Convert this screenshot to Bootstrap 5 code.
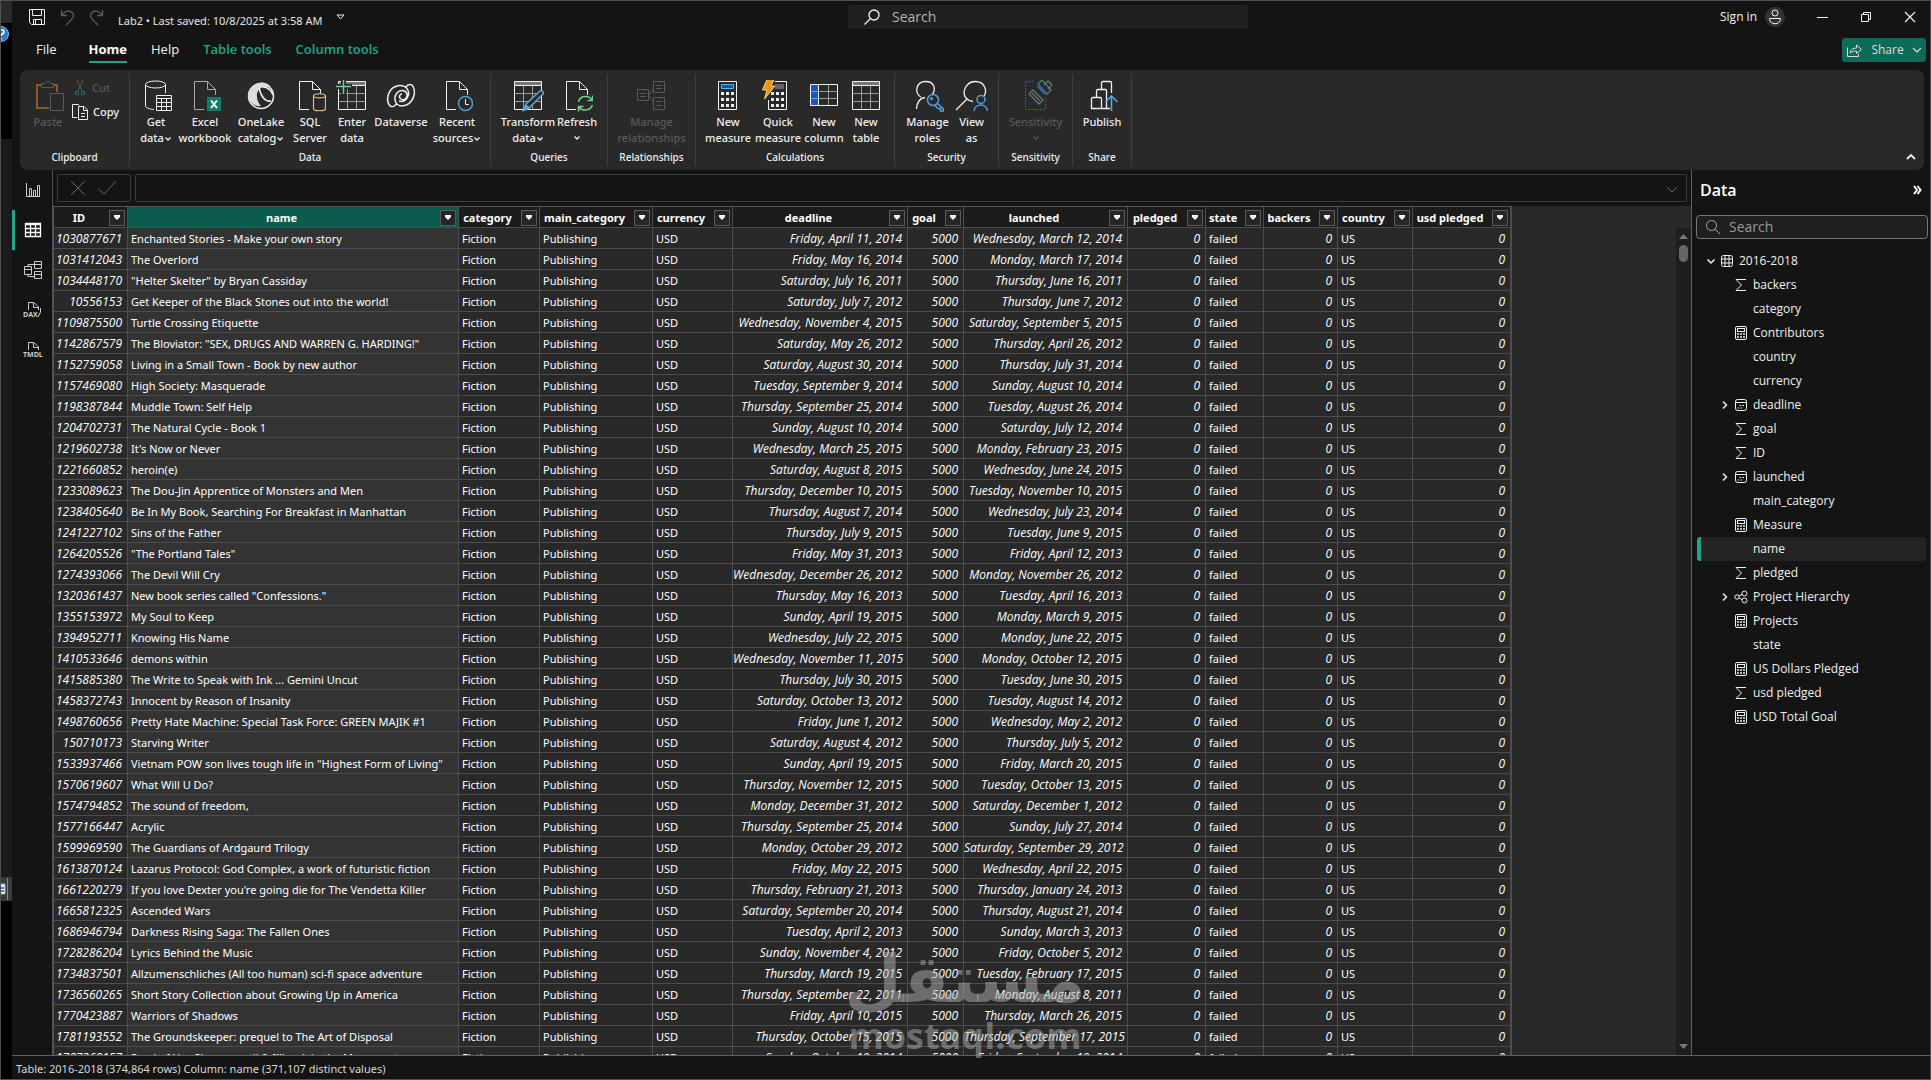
<!DOCTYPE html>
<html lang="en" data-bs-theme="dark">
<head>
<meta charset="utf-8">
<meta name="viewport" content="width=device-width, initial-scale=1">
<title>Lab2</title>
<link href="https://cdn.jsdelivr.net/npm/bootstrap@5.3.0/dist/css/bootstrap.min.css" rel="stylesheet">
<style>
:root{--bg:#141414;--panel:#292929;--line:#4d4d4d;--accent:#23a58c}
body{background:var(--bg);color:#f0f0f0;font-family:"Open Sans","Noto Sans",sans-serif;font-size:12px;line-height:16px;height:100vh;overflow:hidden;border:1px solid #505050}
button{background:none;border:0;padding:0;color:inherit;font:inherit}
svg{display:block;flex:none;fill:none;stroke:currentColor}
a{color:inherit;text-decoration:none}
.backdrop-strip{width:11px;background:#000}
.strip-top{height:22px;background:#2a2a2a}
.strip-mid{height:738px;margin-top:116px;background:#1b1b1b}
.strip-thumb{height:24px;background:#3a3a3a;color:#ddd}
.title-bar{height:32px}
.gap-14{gap:14px}
.gap-2px{gap:2px}
.doc-title{color:#e4e4e4}
.top-search{width:400px;height:24px;background:#1f1f1f;border-radius:2px}
.top-search input,.pane-search input{background:none;border:0;outline:0;color:#c8c8c8;font-size:14px;padding:0;width:100%}
.top-search input::placeholder,.pane-search input::placeholder{color:#b4b4b4;opacity:1}
.pane-search input::placeholder{color:#999}
.title-right{flex:0 0 682px;padding-right:14px}
.avatar{width:20px;height:20px;border-radius:50%;background:#333}
.tab-bar{height:37px;padding-bottom:3px;line-height:20px}
.tab-bar nav{font-size:13px}
.tab-bar a{height:26px;padding-top:2px}
.tab-bar a.current{font-weight:700;color:#fff;border-bottom:2px solid var(--accent)}
.tab-bar a.tool{color:var(--accent);font-weight:600}
.share-btn{width:84px;height:24px;background:#0e6b5a;border-radius:3px;color:#dcdcdc}
.ribbon{height:100px;background:var(--panel);border-radius:8px;margin:0 6px 0 8px;font-family:"Noto Sans",sans-serif;font-size:11px;font-weight:500}
.rgroup{border-right:1px solid #3f3f3f;margin:4px 0;padding-top:6px}
.rgroup .tools{height:70px}
.rgroup .caption-line{font-size:10px;line-height:14px;text-align:center;font-weight:500}
.tool-btn{display:flex;flex-direction:column;align-items:center;white-space:nowrap}
.tool-btn svg{margin-bottom:2px}
.inl{display:inline-block}
.tool-btn .inl{margin:0}
.dim{color:#5a5a5a}
.w109{width:110px}.w361{width:361px}.w117{width:117px}.w88{width:88px}.w199{width:199px}.w104{width:104px}.w74{width:74px}.w59{width:59px}
.b36{width:36px}.b40{width:40px}.b48{width:48px}.b54{width:54px}
.rail{width:40px}
.rail button{height:40px;width:40px;border-left:3px solid transparent;display:flex;align-items:center;justify-content:center;padding-right:2px;color:#ccc}
.rail button.on{border-color:var(--accent);color:#fff}
.rail-wrap{border-right:1px solid #505050}
.fbar{height:36px;padding:4px;background:var(--bg)}
.fbox{border:1px solid #3d3d3d;border-radius:2px;height:28px;color:#666}
.fbox input{background:none;border:0;outline:0;width:100%;color:#fff}
.canvas{background:var(--panel);min-height:0}
.gtable{table-layout:fixed;width:1459px;border-collapse:separate;border-spacing:0;border-top:1px solid #555;border-left:1px solid #555;color:#fff;font-family:"Noto Sans",sans-serif;font-size:11px}
.gtable td,.gtable th{height:21px;padding:2px 5px 0 3px;border-right:1px solid var(--line);border-bottom:1px solid var(--line);white-space:nowrap;overflow:hidden;line-height:18px}
.gtable th{background:#1c1c1c;padding:1px 2px 0 3px}
.gtable th.sel{background:#0b5c4e}
.gtable td.sel{background:#333}
.gtable td:last-child,.gtable th:last-child{border-right:2px solid var(--line)}
.gtable .num{text-align:right;font-style:italic;font-family:"Open Sans",sans-serif;font-size:12px;padding-left:0}
.drop{width:16px;height:16px;background:#262626;border:1px solid #5a5a5a;display:flex;align-items:center;justify-content:center;flex:none}
.vscroll{width:15px;background:#1e1e1e;margin-top:22px;color:#777}
.vthumb{width:9px;height:17px;border-radius:5px;background:#666}
.pane{width:239px;border-left:1px solid #606060}
.pane-head{height:45px;padding-bottom:6px}
.pane h2{font-size:16px;line-height:20px;font-weight:600;margin:0}
.pane-search{height:24px;border:1px solid #777;border-radius:4px;margin:0 2px 0 4px;background:#1f1f1f}
.tree{margin:10px 4px 0 5px}
.tree li{height:24px;border-radius:3px;padding-left:20px}
.tree li.root{padding-left:6px}
.tree li.picked{background:#242424;border-left:4px solid var(--accent);padding-left:16px}
.slot{width:16px;height:16px;display:flex;align-items:center;justify-content:center;flex:none}
.status{height:24px;border-top:1px solid #606060;padding:2px 0 0 4px;color:#d8d8d8}
.doc-title,.status{font-family:"Noto Sans",sans-serif;font-size:11px}
.stamp{position:absolute;left:848px;top:944px;width:234px;color:rgba(175,175,175,.5);pointer-events:none;white-space:nowrap;display:flex;flex-direction:column;align-items:center}
.stamp .ar{font:bold 66px/72px "DejaVu Sans",sans-serif}
.stamp .la{font:bold 36px/40px "Open Sans",sans-serif}
</style>
</head>
<body class="d-flex">
<svg width="0" height="0" class="position-absolute">
<defs>
<symbol id="doc" viewBox="0 0 32 32"><path d="M15 29.500H5.500V1.500H18.500L26.500 9.500V15M18.500 1.500V9.500H26.500"/></symbol>
<symbol id="grid4" viewBox="0 0 32 32"><path fill="#777" stroke="none" d="M2 2h28v4H2z"/><path stroke="#999" d="M2 13.500H30M2 21.500H30M11.500 6V29M20.500 6V29"/><path d="M2.500 1.500H29.500V29.500H2.500zM2 5.500H30"/></symbol>
<symbol id="down" viewBox="0 0 8 8"><path d="M1.500 2.500L4 5L6.500 2.500" stroke-width="1.300"/></symbol>
<symbol id="lens" viewBox="0 0 16 16"><circle cx="10" cy="6" r="5" stroke-width="1.300"/><path d="M6.500 9.500L.500 15.500" stroke-width="1.300"/></symbol>
<symbol id="lens2" viewBox="0 0 16 16"><circle cx="6.500" cy="6.500" r="5"/><path d="M10 10L15 15"/></symbol>
<symbol id="calc" viewBox="0 0 16 16"><rect x="2.500" y="1.500" width="11" height="13" rx="1.500"/><rect x="4.500" y="3.500" width="7" height="3"/><path stroke-dasharray="2 1" stroke-width="1.500" d="M4 9h8M4 12h8"/></symbol>
<symbol id="sigma" viewBox="0 0 16 16"><path d="M13 2.500H3L8.500 8L3 13.500H13"/></symbol>
<symbol id="cal" viewBox="0 0 16 16"><rect x="2.500" y="2.500" width="11" height="11" rx="2"/><path d="M2.500 5.500H13.500"/><path stroke-dasharray="1.500 1.500" d="M6.500 8.500H12M4.500 11H9"/></symbol>
<symbol id="hier" viewBox="0 0 16 16"><circle cx="4" cy="8" r="2.200"/><circle cx="11.500" cy="4.500" r="2.500"/><circle cx="11.500" cy="11.500" r="2.500"/><path d="M6 7L9 5.500M6 9L9 10.500"/></symbol>
<symbol id="tbl" viewBox="0 0 16 16"><rect x="2.500" y="2.500" width="11" height="11" rx="2"/><path d="M2.500 6H13.500M2.500 10H13.500M6 2.500V13.500M10 2.500V13.500"/></symbol>
<symbol id="caretR" viewBox="0 0 16 16"><path stroke-width="1.500" d="M6 4.500L9.500 8L6 11.500"/></symbol>
<symbol id="caretD" viewBox="0 0 16 16"><path stroke-width="1.500" d="M4.500 6.500L8 10L11.500 6.500"/></symbol>
</defs>
</svg>

<div class="backdrop-strip flex-shrink-0 overflow-hidden position-relative">
  <div class="strip-top"></div>
  <div class="strip-mid"></div>
  <div class="strip-thumb"><svg width="11" height="24"><path fill="#fff" stroke="#9ab" d="M-4 7h8v10h-8z"/><path stroke="#3a86c8" stroke-width="2" d="M0 11h3M0 14h3"/><path stroke="#888" d="M6.500 1v22"/></svg></div>
  <svg class="position-absolute start-0 top-0" width="10" height="44" viewBox="0 -24 10 44"><circle cx="0" cy="9" r="7.500" fill="#1f7fd0" stroke="#7fbdf0"/><path d="M-2 7c0-3 5-3 5 0 0 2-3 2-3 4M0 13v1.500" stroke="#fff" stroke-width="1.600"/></svg>
</div>

<div class="d-flex flex-column flex-grow-1 overflow-hidden">
  <header>
    <div class="title-bar d-flex align-items-center">
      <div class="d-flex align-items-center flex-grow-1 ps-3 gap-14">
        <button aria-label="Save"><svg width="18" height="18"><path d="M1.500 1.500H16.500V16.500H3.500L1.500 14.500zM4.500 1.500V7.500H13.500V1.500M5.500 16.500V11.500H13.500V16.500M7.500 12V16"/></svg></button>
        <button class="dim" aria-label="Undo"><svg width="15" height="17"><path stroke-width="1.300" d="M1.500 1V6.500H7M1.500 6.500C5 1 10 1 12.500 4S13 9 11.500 10.500L6 16"/></svg></button>
        <button class="dim" aria-label="Redo"><svg width="15" height="17"><path stroke-width="1.300" d="M13.500 1V6.500H8M13.500 6.500C10 1 5 1 2.500 4S2 9 3.500 10.500L9 16"/></svg></button>
        <span class="doc-title pt-2">Lab2 &bull; Last saved: 10/8/2025 at 3:58 AM</span>
        <button aria-label="Customize"><svg width="9" height="7"><path d="M1 1H8L4.500 5z"/></svg></button>
      </div>
      <label class="top-search d-flex align-items-center ps-3 flex-shrink-0"><svg class="me-2" width="16" height="16"><use href="#lens"/></svg><input class="ms-1" type="search" aria-label="Search" placeholder="Search"></label>
      <div class="title-right d-flex align-items-center justify-content-end">
        <a href="#">Sign in</a>
        <span class="avatar ms-2"><svg width="20" height="20" stroke="#aaa"><circle cx="10" cy="6" r="3"/><path d="M4.500 11.500h11c0 7-11 7-11 0z"/></svg></span>
        <button class="ms-4 ps-2" aria-label="Minimize"><svg width="11" height="12"><path d="M0 6.500H11"/></svg></button>
        <button class="ms-4 ps-2" aria-label="Restore"><svg width="12" height="12"><path d="M1.500 3.500H8.500V10.500H1.500zM3.500 3V1.500H10.500V8.500H9"/></svg></button>
        <button class="ms-4 ps-2" aria-label="Close"><svg width="12" height="12"><path stroke-width="1.200" d="M1 1L11 11M11 1L1 11"/></svg></button>
      </div>
    </div>
    <div class="tab-bar d-flex align-items-center">
      <nav class="d-flex gap-4 ps-4 flex-grow-1">
        <a href="#" class="me-2">File</a><a href="#" class="current">Home</a><a href="#">Help</a><a href="#" class="tool">Table tools</a><a href="#" class="tool">Column tools</a>
      </nav>
      <button class="share-btn d-flex align-items-center justify-content-center gap-2 me-1"><svg width="17" height="15"><path d="M1.500 4.500V13.500H12.500V11M4 10C4.500 6.500 7 5 10.500 5V2L15.500 6.500L10.500 10.500V8C8 8 6 8.500 4 10z"/></svg>Share<svg width="10" height="8"><path stroke-width="1.200" d="M1 2L5 6L9 2"/></svg></button>
    </div>
    <div class="ribbon d-flex">
      <section class="rgroup w109">
        <div class="tools d-flex ps-2">
          <button class="tool-btn b40 dim" disabled><svg width="32" height="32"><path stroke="#8a5a1e" stroke-width="2" d="M9 5H5V28H17M22 5H25V12"/><path d="M9.500 7.500V3.500H12.500C12.500 1 18.500 1 18.500 3.500H21.500V7.500zM18.500 13.500H31.500V30.500H18.500z"/></svg>Paste</button>
          <div class="ps-1">
            <button class="dim d-flex align-items-center gap-1" disabled><svg width="16" height="16"><path d="M5 0L10 11M11 0L6 11"/><path stroke="#276a80" d="M3.500 11.500h3v3h-3zM9.500 11.500h3v3h-3z"/></svg>Cut</button>
            <button class="d-flex align-items-center gap-1 mt-2"><svg width="17" height="16"><path d="M5 13.500H.500V.500H6.500L7.500 1.500M6.500 2.500H12L15.500 6V15.500H6.500zM11.500 3V6.500H15M9 9.500H13M9 12.500H13"/></svg>Copy</button>
          </div>
        </div>
        <div class="caption-line">Clipboard</div>
      </section>
      <section class="rgroup w361">
        <div class="tools d-flex justify-content-center gap-2px">
          <button class="tool-btn b40"><svg width="32" height="32"><ellipse cx="15.500" cy="4.500" rx="10" ry="3.500"/><path d="M5.500 4.500V26C6 28 9 29 14 29.500M25.500 4.500V13M16.500 15.500H31.500V30.500H16.500zM16.500 18.500H31.500M16.500 22.500H31.500M16.500 26.500H31.500M21.500 18V30M26.500 18V30"/></svg>Get<span>data<svg class="inl" width="8" height="8"><use href="#down"/></svg></span></button>
          <button class="tool-btn b54"><svg width="32" height="32"><use href="#doc" stroke="#aaa"/><path fill="#107c67" stroke="none" d="M18 17h14v14H18z"/><path stroke="#fff" stroke-width="2" d="M22 20.500L28 28M28 20.500L22 28"/></svg>Excel<span>workbook</span></button>
          <button class="tool-btn b54"><svg width="32" height="32"><circle cx="16" cy="16" r="12.500" stroke-width="1.500"/><path fill="#ddd" stroke="none" d="M3 17C3 10 7 6 10 5C15 0 25 3 26 8C18 5 11 9 12 17C12 20 14 24 16 26C9 27 5 22 3 17z"/><path stroke-width="1.500" d="M14 8C16 16 20 22 26 21M28 15C26 10 22 7 18 7"/></svg>OneLake<span>catalog<svg class="inl" width="8" height="8"><use href="#down"/></svg></span></button>
          <button class="tool-btn b40"><svg width="32" height="32"><use href="#doc"/><path fill="#292929" stroke="#e8bd73" stroke-width="1.200" d="M19.500 16C19.500 13 31.500 13 31.500 16V28.500C31.500 31.500 19.500 31.500 19.500 28.500zM19.500 16C19.500 18.500 31.500 18.500 31.500 16"/></svg>SQL<span>Server</span></button>
          <button class="tool-btn b40"><svg width="32" height="32"><use href="#grid4"/><path stroke="#292929" stroke-width="5" d="M0 6.500H16M7.500 0V15"/><path stroke="#6fd08c" stroke-width="1.400" d="M0 6.500H15M7.500 -1V14"/></svg>Enter<span>data</span></button>
          <button class="tool-btn b54"><svg width="32" height="32" stroke-width="1.500"><path d="M27 5C32 11 29 25 17 26C10 26 8 18 12 13C15 9 21 10 22 14C23 18 19 21 16 19C13 17 15 14 17 14M27 5C24 4 22 5 21 7M5 26C0 20 3 7 14 5.500C22 5 26 12 22 18C20 21 17 22 14 21M5 26C8 27.500 10 26 11 24"/></svg>Dataverse</button>
          <button class="tool-btn b54"><svg width="32" height="32"><use href="#doc"/><circle cx="24.500" cy="23.500" r="7" fill="#292929" stroke="#4f9fd6" stroke-width="1.500"/><path d="M24.500 19V24.500H28"/></svg>Recent<span>sources<svg class="inl" width="8" height="8"><use href="#down"/></svg></span></button>
        </div>
        <div class="caption-line">Data</div>
      </section>
      <section class="rgroup w117">
        <div class="tools d-flex justify-content-center gap-2px">
          <button class="tool-btn b54"><svg width="32" height="32"><use href="#grid4"/><path stroke="#5aa6e0" fill="#292929" stroke-width="1.500" d="M11.500 30.500L14 24L28 11C30 10 32 12 31 14L17 28z"/><path fill="#5aa6e0" stroke="none" d="M11 31l3-7 4 4z"/></svg>Transform<span>data<svg class="inl" width="8" height="8"><use href="#down"/></svg></span></button>
          <button class="tool-btn b40"><svg width="32" height="32"><use href="#doc"/><path stroke="#292929" stroke-width="4" d="M18 15V31"/><path stroke="#6fd08c" stroke-width="1.500" d="M17.500 22C19 15 28 15 31 20M31.500 15.500V20.500H26.500M31.500 25C29 31 21 31.500 18 27M17.500 31.500V26.500H22.500"/></svg>Refresh<svg class="mt-1" width="8" height="8"><use href="#down"/></svg></button>
        </div>
        <div class="caption-line">Queries</div>
      </section>
      <section class="rgroup w88">
        <div class="tools d-flex justify-content-center">
          <button class="tool-btn dim" disabled><svg width="32" height="32"><path d="M2.500 9.500H13.500V20.500H2.500zM18.500 1.500H29.500V12.500H18.500zM18.500 17.500H29.500V29.500H18.500zM13.500 15L18 10M13.500 15L18 21M5 13.500H11M5 16.500H11M21 5.500H27M21 8.500H27M21 21.500H27M21 25.500H27"/></svg>Manage<span>relationships</span></button>
        </div>
        <div class="caption-line">Relationships</div>
      </section>
      <section class="rgroup w199">
        <div class="tools d-flex justify-content-center gap-2px">
          <button class="tool-btn b48"><svg width="32" height="32"><path d="M6.500 1.500H24.500V29.500H6.500z"/><path fill="#1c4fa8" stroke="#56b4ee" d="M9.500 4.500H21.500V8.500H9.500z"/><path stroke-width="3" stroke-dasharray="3 2" d="M9 13.500H22M9 19.500H22M9 25.500H22"/></svg>New<span>measure</span></button>
          <button class="tool-btn b48"><svg width="32" height="32"><path d="M6.500 20V29.500H24.500V1.500H13"/><path fill="#666" stroke="none" d="M13 4h9v5h-9z"/><path stroke-width="3" stroke-dasharray="3 2" d="M9 13.500H22M9 19.500H22M9 25.500H22"/><path fill="#e09b1c" stroke="#ffd27a" d="M5-.500H12L9 6H13L2.500 19L5 10H.500z"/></svg>Quick<span>measure</span></button>
          <button class="tool-btn b40"><svg width="32" height="32"><path fill="#1d54c4" stroke="none" d="M2 5h9v21H2z"/><path stroke="#999" d="M11 11.500H29M11 18.500H29M20.500 5V26"/><path stroke="#5ab0ee" d="M3 11.500H10M3 18.500H10"/><path d="M2.500 4.500H29.500V25.500H2.500zM10.500 5V26"/></svg>New<span>column</span></button>
          <button class="tool-btn b40"><svg width="32" height="32"><use href="#grid4"/></svg>New<span>table</span></button>
        </div>
        <div class="caption-line">Calculations</div>
      </section>
      <section class="rgroup w104">
        <div class="tools d-flex justify-content-center gap-2px">
          <button class="tool-btn b48"><svg width="32" height="32" stroke-width="1.300"><path d="M9 17C2 13 4 1.500 13.500 1.500S24 10 20 15M4.500 29C5 22 8 18 13 17.500"/><g stroke="#4fa3dc" stroke-width="1.500"><circle cx="21" cy="20" r="5.500"/><path d="M25 23L31.500 29V31H28.500V28.500H26L23 25.500"/><circle cx="19.500" cy="18.500" r=".8"/></g></svg>Manage<span>roles</span></button>
          <button class="tool-btn b36"><svg width="32" height="32" stroke-width="1.300"><path d="M17 21.500C3 20 7 1.500 19 1.500C30 1.500 31 12 28 16M11 19L0 30"/><g stroke="#4fa3dc" stroke-width="1.500"><circle cx="25" cy="19.500" r="4"/><path d="M18 31C19 23 30.500 23 31.500 31"/></g></svg>View<span>as</span></button>
        </div>
        <div class="caption-line">Security</div>
      </section>
      <section class="rgroup w74">
        <div class="tools d-flex justify-content-center">
          <button class="tool-btn dim" disabled><svg width="32" height="32"><path stroke="#28609a" stroke-dasharray="2 1" d="M14 1.500H5.500V29.500H25.500V17"/><path stroke="#5d7a70" stroke-width="1.300" d="M9 14L13 10L23 20L19 24zM12 13L20 21M18 4L22 0L31 10L27 14zM24 5L28 1L32 5L28 9"/><path stroke="#2f62a6" stroke-width="3" d="M18 6L26 14"/></svg>Sensitivity<svg class="mt-1" width="8" height="8"><use href="#down"/></svg></button>
        </div>
        <div class="caption-line">Sensitivity</div>
      </section>
      <section class="rgroup w59">
        <div class="tools d-flex justify-content-center">
          <button class="tool-btn"><svg width="32" height="32" stroke-width="1.300"><path d="M5.500 28.500V19Q5.500 17.500 7 17.500H14.500Q15.500 17.500 15.500 19V28.500zM10.500 17V11Q10.500 9.500 12 9.500H19.500Q20.500 9.500 20.500 11V28.500M15.500 9V3Q15.500 1.500 17 1.500H24Q25.500 1.500 25.500 3V13M15 28.500H24"/><path stroke="#4fb3e8" stroke-width="1.500" d="M25.500 31V17M19.500 22L25.500 16L31.500 22"/></svg>Publish</button>
        </div>
        <div class="caption-line">Share</div>
      </section>
      <button class="ms-auto align-self-end me-2 pb-2" aria-label="Collapse ribbon"><svg width="10" height="10"><path stroke-width="1.800" d="M1 7L5 3L9 7"/></svg></button>
    </div>
  </header>

  <main class="d-flex flex-grow-1 overflow-hidden">
    <div class="rail-wrap flex-shrink-0">
    <nav class="rail" aria-label="Views">
      <button aria-label="Report view"><svg width="16" height="16"><path d="M1.500 1V14.500H15M4.500 14V6.500H6.500V14M8.500 14V8.500H10.500V14M12.500 14V3.500H14.500V14"/></svg></button>
      <button class="on" aria-label="Table view"><svg width="18" height="18"><path stroke-width="1.300" d="M1.500 2.500H16.500V15.500H1.500zM1 3.500H17M1 7.500H17M1 11.500H17M6.500 4V16M11.500 4V16"/></svg></button>
      <button aria-label="Model view"><svg width="20" height="20"><path d="M1.500 6.500H8.500V14.500H1.500zM11.500 1.500H18.500V8.500H11.500zM11.500 11.500H18.500V18.500H11.500zM2 9.500H8M12 4.500H18M12 14.500H18M5 6V4.500H11M5 15V16.500H11"/></svg></button>
      <button aria-label="DAX query view"><svg width="20" height="20" viewBox="0 0 20 20"><path d="M5.500 10V2.500H11L15.500 7V10M10.500 3V7.500H15M17.500 8V12L15 17"/><text x="0" y="17" font-size="7" font-weight="700" fill="currentColor" stroke="none">DAX</text></svg></button>
      <button aria-label="TMDL view"><svg width="20" height="20" viewBox="0 0 20 20"><path d="M5.500 10V2.500H11L15.500 7V10M10.500 3V7.500H15"/><text x="0" y="17" font-size="7" font-weight="700" fill="currentColor" stroke="none">TMDL</text></svg></button>
    </nav>
    </div>
    <div class="d-flex flex-column flex-grow-1 overflow-hidden">
      <div class="fbar d-flex flex-shrink-0">
        <div class="fbox d-flex align-items-center px-2 me-1 flex-shrink-0"><button class="ms-1" aria-label="Cancel"><svg width="16" height="16"><path d="M1 1L15 15M15 1L1 15"/></svg></button><button class="ms-2 me-1 ps-1" aria-label="Commit"><svg width="20" height="16"><path d="M.500 9L6 14L18 1"/></svg></button></div>
        <div class="fbox d-flex align-items-center flex-grow-1 px-1"><input type="text" aria-label="Formula"><svg class="me-1 mt-1" width="12" height="8"><path d="M1 1L6 6L11 1"/></svg></div>
      </div>
      <div class="canvas d-flex flex-grow-1 overflow-hidden">
        <div class="flex-grow-1 overflow-hidden">
          <table class="gtable">
            <colgroup id="cols"></colgroup>
            <thead><tr id="head"></tr></thead>
            <tbody id="rows"></tbody>
          </table>
        </div>
        <div class="vscroll d-flex flex-column align-items-center flex-shrink-0">
          <svg class="mt-1" width="9" height="9"><path fill="currentColor" stroke="none" d="M0 7L4.500 2L9 7z"/></svg>
          <div class="vthumb mt-1"></div>
          <svg class="mt-auto mb-1" width="9" height="9"><path fill="currentColor" stroke="none" d="M0 2L4.500 7L9 2z"/></svg>
        </div>
      </div>
    </div>
    <aside class="pane flex-shrink-0">
      <div class="d-flex align-items-center justify-content-between ps-2 pe-2 pane-head"><h2>Data</h2><button aria-label="Collapse"><svg width="9" height="10"><path stroke="#fff" stroke-width="2" d="M1 1L4 5L1 9M4.500 1L7.500 5L4.500 9"/></svg></button></div>
      <label class="pane-search d-flex align-items-center"><svg class="ms-2 me-2" width="16" height="16" color="#aaa"><use href="#lens2"/></svg><input type="search" aria-label="Search fields" placeholder="Search"></label>
      <ul class="tree list-unstyled mb-0" id="tree"></ul>
    </aside>
  </main>
  <footer class="status d-flex align-items-center flex-shrink-0">Table: 2016-2018 (374,864 rows) Column: name (371,107 distinct values)</footer>
</div>
<div class="stamp"><div class="ar" lang="ar">مستقل</div><div class="la">mostaql.com</div></div>

<script>
const columns = [["ID",74],["name",331],["category",81],["main_category",113],["currency",80],["deadline",175],["goal",56],["launched",164],["pledged",78],["state",58],["backers",74],["country",75],["usd pledged",99]];
const records = `1030877671|Enchanted Stories - Make your own story|Friday, April 11, 2014|Wednesday, March 12, 2014
1031412043|The Overlord|Friday, May 16, 2014|Monday, March 17, 2014
1034448170|"Helter Skelter" by Bryan Cassiday|Saturday, July 16, 2011|Thursday, June 16, 2011
10556153|Get Keeper of the Black Stones out into the world!|Saturday, July 7, 2012|Thursday, June 7, 2012
1109875500|Turtle Crossing Etiquette|Wednesday, November 4, 2015|Saturday, September 5, 2015
1142867579|The Bloviator: "SEX, DRUGS AND WARREN G. HARDING!"|Saturday, May 26, 2012|Thursday, April 26, 2012
1152759058|Living in a Small Town - Book by new author|Saturday, August 30, 2014|Thursday, July 31, 2014
1157469080|High Society: Masquerade|Tuesday, September 9, 2014|Sunday, August 10, 2014
1198387844|Muddle Town: Self Help|Thursday, September 25, 2014|Tuesday, August 26, 2014
1204702731|The Natural Cycle - Book 1|Sunday, August 10, 2014|Saturday, July 12, 2014
1219602738|It's Now or Never|Wednesday, March 25, 2015|Monday, February 23, 2015
1221660852|heroin(e)|Saturday, August 8, 2015|Wednesday, June 24, 2015
1233089623|The Dou-Jin Apprentice of Monsters and Men|Thursday, December 10, 2015|Tuesday, November 10, 2015
1238405640|Be In My Book, Searching For Breakfast in Manhattan|Thursday, August 7, 2014|Wednesday, July 23, 2014
1241227102|Sins of the Father|Thursday, July 9, 2015|Tuesday, June 9, 2015
1264205526|"The Portland Tales"|Friday, May 31, 2013|Friday, April 12, 2013
1274393066|The Devil Will Cry|Wednesday, December 26, 2012|Monday, November 26, 2012
1320361437|New book series called "Confessions."|Thursday, May 16, 2013|Tuesday, April 16, 2013
1355153972|My Soul to Keep|Sunday, April 19, 2015|Monday, March 9, 2015
1394952711|Knowing His Name|Wednesday, July 22, 2015|Monday, June 22, 2015
1410533646|demons within|Wednesday, November 11, 2015|Monday, October 12, 2015
1415885380|The Write to Speak with Ink ... Gemini Uncut|Thursday, July 30, 2015|Tuesday, June 30, 2015
1458372743|Innocent by Reason of Insanity|Saturday, October 13, 2012|Tuesday, August 14, 2012
1498760656|Pretty Hate Machine: Special Task Force: GREEN MAJIK #1|Friday, June 1, 2012|Wednesday, May 2, 2012
150710173|Starving Writer|Saturday, August 4, 2012|Thursday, July 5, 2012
1533937466|Vietnam POW son lives tough life in "Highest Form of Living"|Sunday, April 19, 2015|Friday, March 20, 2015
1570619607|What Will U Do?|Thursday, November 12, 2015|Tuesday, October 13, 2015
1574794852|The sound of freedom,|Monday, December 31, 2012|Saturday, December 1, 2012
1577166447|Acrylic|Thursday, September 25, 2014|Sunday, July 27, 2014
1599969590|The Guardians of Ardgaurd Trilogy|Monday, October 29, 2012|Saturday, September 29, 2012
1613870124|Lazarus Protocol: God Complex, a work of futuristic fiction|Friday, May 22, 2015|Wednesday, April 22, 2015
1661220279|If you love Dexter you're going die for The Vendetta Killer|Thursday, February 21, 2013|Thursday, January 24, 2013
1665812325|Ascended Wars|Saturday, September 20, 2014|Thursday, August 21, 2014
1686946794|Darkness Rising Saga: The Fallen Ones|Tuesday, April 2, 2013|Sunday, March 3, 2013
1728286204|Lyrics Behind the Music|Sunday, November 4, 2012|Friday, October 5, 2012
1734837501|Allzumenschliches (All too human) sci-fi space adventure|Thursday, March 19, 2015|Tuesday, February 17, 2015
1736560265|Short Story Collection about Growing Up in America|Thursday, September 22, 2011|Monday, August 8, 2011
1770423887|Warriors of Shadows|Friday, April 10, 2015|Thursday, March 26, 2015
1781193552|The Groundskeeper: prequel to The Art of Disposal|Thursday, October 15, 2015|Thursday, September 17, 2015
1787368157|Seed of Her Shame: until &amp; Illbook in the Movement|Sunday, October 19, 2014|Friday, September 19, 2014`.split("\n").map(r => r.split("|"));
document.getElementById("cols").innerHTML = columns.map(c => `<col style="width:${c[1]}px">`).join("");
document.getElementById("head").innerHTML = columns.map(c => `<th class="${c[0] === "name" ? "sel" : ""}"><div class="d-flex align-items-center"><span class="flex-grow-1 text-center pe-2">${c[0]}</span><button class="drop" aria-label="Filter ${c[0]}"><svg width="6" height="5"><path fill="#fff" stroke="none" d="M0 0H6V2L3 5L0 2z"/></svg></button></div></th>`).join("");
document.getElementById("rows").innerHTML = records.map(([id, name, due, start]) => `<tr><td class="num">${id}</td><td class="sel">${name}</td><td>Fiction</td><td>Publishing</td><td>USD</td><td class="num">${due}</td><td class="num">5000</td><td class="num">${start}</td><td class="num">0</td><td>failed</td><td class="num">0</td><td>US</td><td class="num">0</td></tr>`).join("");
const fields = [["backers","sigma"],["category"],["Contributors","calc"],["country"],["currency"],["deadline","cal",1],["goal","sigma"],["ID","sigma"],["launched","cal",1],["main_category"],["Measure","calc"],["name"],["pledged","sigma"],["Project Hierarchy","hier",1],["Projects","calc"],["state"],["US Dollars Pledged","calc"],["usd pledged","sigma"],["USD Total Goal","calc"]];
const glyph = id => `<span class="slot">${id ? `<svg width="16" height="16"><use href="#${id}"/></svg>` : ""}</span>`;
document.getElementById("tree").innerHTML = `<li class="root d-flex align-items-center">${glyph("caretD")}${glyph("tbl")}<span class="ms-1">2016-2018</span></li>` +
  fields.map(([n, ic, open]) => `<li class="d-flex align-items-center${n === "name" ? " picked" : ""}">${glyph(open && "caretR")}${glyph(ic)}<span class="ms-1">${n}</span></li>`).join("");
</script>
<script src="https://cdn.jsdelivr.net/npm/bootstrap@5.3.0/dist/js/bootstrap.bundle.min.js"></script>
</body>
</html>
